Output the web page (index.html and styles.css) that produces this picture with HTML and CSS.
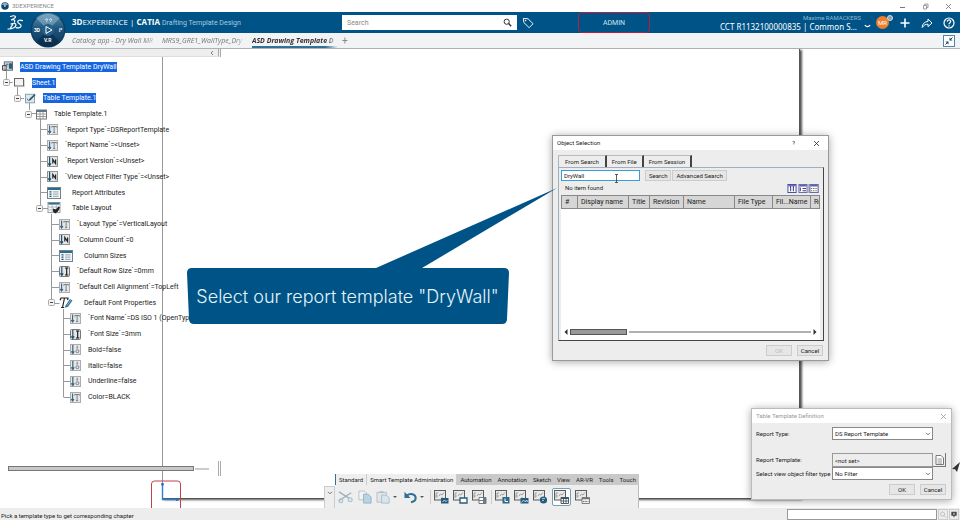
FILE: index.html
```html
<!DOCTYPE html>
<html lang="en">
<head>
    <meta charset="UTF-8">
    <meta name="viewport" content="width=device-width, initial-scale=1.0">
    <title>3DEXPERIENCE</title>
    <link rel="stylesheet" href="styles.css">
</head>
<body>
    <svg class="sprite" aria-hidden="true">
        <symbol id="i-text" viewBox="0 0 11 11">
            <rect x=".5" y=".5" width="10" height="10" fill="#e4e6e8" stroke="#a9adb0"/>
            <path d="M2.6 1.5v7M1.2 7l1.4 2L4 7" fill="none" stroke="#35657f" stroke-width="1.1"/>
            <path d="M4.8 3.6V2.5h4.6v1.1M7.1 2.5v6M6 8.6h2.2" fill="none" stroke="#777" stroke-width=".9"/>
        </symbol>
        <symbol id="i-num" viewBox="0 0 11 11">
            <rect x=".5" y=".5" width="10" height="10" fill="#e4e6e8" stroke="#8f9498"/>
            <path d="M2.6 1v8M1.2 7.4l1.4 2 1.4-2" fill="none" stroke="#23546f" stroke-width="1.2"/>
            <path d="M5.8 7.5V3.5L8.6 7.5V3.5" fill="none" stroke="#222" stroke-width="1.2"/>
        </symbol>
        <symbol id="i-len" viewBox="0 0 11 11">
            <rect x=".5" y=".5" width="10" height="10" rx="1" fill="#e4e6e8" stroke="#777"/>
            <path d="M2.8 1v8M1.4 7.4l1.4 2 1.4-2" fill="none" stroke="#23546f" stroke-width="1.2"/>
            <path d="M6 2h3.4M7.7 2v7M6 9h3.4" fill="none" stroke="#111" stroke-width="1.1"/>
        </symbol>
        <symbol id="i-bool" viewBox="0 0 11 11">
            <rect x=".5" y=".5" width="10" height="10" fill="#e4e6e8" stroke="#a9adb0"/>
            <path d="M2.8 1v8M1.4 7.4l1.4 2 1.4-2" fill="none" stroke="#35657f" stroke-width="1.2"/>
            <path d="M7.2 1.8v3" stroke="#777"/>
            <circle cx="7.4" cy="7.2" r="1.5" fill="none" stroke="#777" stroke-width=".9"/>
        </symbol>
        <symbol id="i-list" viewBox="0 0 14 12">
            <rect x=".5" y=".5" width="13" height="11" fill="#f3f7f9" stroke="#70838e"/>
            <path d="M1 2h12" stroke="#2a6c8c" stroke-width="2"/>
            <path d="M2.5 4.9h2M2.5 7.1h2M2.5 9.3h2" stroke="#1d4f6a" stroke-width="1.2"/>
            <path d="M6 4.9h5.5M6 7.1h5.5M6 9.3h5.5" stroke="#7a8b95" stroke-width=".8"/>
        </symbol>
        <symbol id="i-layout" viewBox="0 0 14 13">
            <rect x=".5" y=".5" width="13" height="11" fill="#fff" stroke="#8b979e"/>
            <path d="M1 1.8h12" stroke="#2a6c8c" stroke-width="2"/>
            <path d="M1 5.5h12M1 8.5h12M5 2v9.5M9.5 2v9.5" stroke="#9aa4aa" stroke-width=".8"/>
            <path d="M6 7l3 1 3-3 1.5 1-2 4-3 2.5L6 10.5z" fill="#222"/>
        </symbol>
        <symbol id="i-font" viewBox="0 0 14 12">
            <path d="M1 3.2L2 1h7l-.4 2.2M5.5 1L3.5 10.5M2 10.5h3.2" fill="none" stroke="#222" stroke-width="1.2"/>
            <path d="M6.5 8.5L11 2l2.5 1.6L9 9.8l-3 1z" fill="#2b7195"/>
            <path d="M8 8.5L12 3" stroke="#a9d2e6" stroke-width=".7"/>
        </symbol>
        <symbol id="i-grid" viewBox="0 0 11 10">
            <rect x=".5" y=".5" width="10" height="9" fill="#fff" stroke="#777"/>
            <path d="M1 1.5h9" stroke="#54758a" stroke-width="2"/>
            <path d="M1 4.5h9M1 7h9M4 2v7.5M7 2v7.5" stroke="#888" stroke-width=".8"/>
        </symbol>
        <symbol id="i-sheet" viewBox="0 0 11 9">
            <rect x=".5" y=".5" width="9" height="7.5" fill="#f4f4f4" stroke="#666"/>
            <path d="M1.5 8.6h9.2V1.5" fill="none" stroke="#bbb" stroke-width=".7"/>
        </symbol>
        <symbol id="i-pen" viewBox="0 0 11 10">
            <rect x=".5" y=".8" width="9" height="8.5" fill="#dce9ef" stroke="#8da0aa"/>
            <path d="M3.5 7.5L4.2 5.5 9.5.4l1.2 1.2-5.200 5.200z" fill="#2f566b"/>
            <path d="M2 5l1.5 2.500" stroke="#4d8f7a"/>
        </symbol>
        <symbol id="i-root" viewBox="0 0 12 11">
            <rect x="2.5" y=".5" width="9" height="9" fill="#d6e2e9" stroke="#48606e"/>
            <path d="M4 3h3M4 5h2M8 2.500h2.500v5H8z" fill="#2b5670" stroke="#2b5670"/>
            <path d="M.5 4.500h4v5h-4z" fill="#fff" stroke="#333"/>
            <path d="M1.500 6h2M1.500 8h2" stroke="#333" stroke-width=".7"/>
        </symbol>
        <symbol id="i-minus" viewBox="0 0 7 7">
            <rect x=".5" y=".5" width="6" height="6" rx="1" fill="#f4f4f4" stroke="#aaa"/>
            <path d="M2 3.500h3" stroke="#444"/>
        </symbol>
        <symbol id="i-chevron" viewBox="0 0 6 4">
            <path d="M1 .8l2 2 2-2" fill="none" stroke="#555" stroke-width=".8"/>
        </symbol>
        <symbol id="i-close" viewBox="0 0 7 7">
            <path d="M1 1l5 5M6 1L1 6" stroke="currentColor" stroke-width=".8"/>
        </symbol>
        <symbol id="i-tpl" viewBox="0 0 15 14">
            <rect x=".5" y=".5" width="11" height="9.500" fill="#e9e9e9" stroke="#5b5b5b"/>
            <path d="M2 8V3h2M5 6l1.500-2L8 5l2-2.500M2 6h2M7 8h2" fill="none" stroke="#8c8c8c" stroke-width=".8"/>
        </symbol>
    </svg>

    <header class="titlebar">
        <svg class="app-logo" viewBox="0 0 9 9"><circle cx="4.500" cy="4.500" r="4.200" fill="#12456b"/><path d="M1 3a4 4 0 0 1 7 0L4.500 4z" fill="#7fb0cf"/><path d="M3.800 3.500l2 1-2 1.200z" fill="#fff"/></svg>
        <span class="app-name">3DEXPERIENCE</span>
        <button class="win-btn" aria-label="Minimize"><svg viewBox="0 0 7 7"><path d="M1 4.500h5" stroke="#777"/></svg></button>
        <button class="win-btn" aria-label="Restore"><svg viewBox="0 0 7 7"><path d="M1.500 2.500h3v3.500h-3zM2.700 2.300V1H6v3.600H4.700" fill="none" stroke="#777" stroke-width=".7"/></svg></button>
        <button class="win-btn" aria-label="Close"><svg viewBox="0 0 7 7"><use href="#i-close"/></svg></button>
    </header>

    <nav class="topbar">
        <svg class="ds-logo" viewBox="0 0 16 16">
            <g fill="none" stroke="#fff" stroke-width="1.200" stroke-linecap="round" stroke-linejoin="round">
                <path d="M3.500 1.500c2.500-1 5-1 5 .2S6.500 4 4.500 4.800c2.500-.4 4 .4 3 2.200"/>
                <path d="M1 14c3.500.2 8-1.400 8-4C9 8 6.500 7.800 4 9l2-.2L3.200 13.600"/>
                <path d="M15.500 5.600c-2.400-1-4.800-.4-4.800 1.200 0 1.800 3.700 2.200 3.400 4.200-.3 1.800-2.800 2.200-5 1.600"/>
            </g>
        </svg>
        <div class="brand"><b>3D</b>EXPERIENCE <span class="bar">|</span> <b>CATIA</b> <span class="app">Drafting Template Design</span></div>
        <form class="search">
            <input type="text" placeholder="Search" aria-label="Search">
            <button type="button" aria-label="Run search"><svg viewBox="0 0 9 9"><circle cx="3.700" cy="3.700" r="2.600" fill="none" stroke="#333"/><path d="M5.600 5.600l2.600 2.600" stroke="#333" stroke-width="1.400"/></svg></button>
        </form>
        <button class="icon-btn tag" aria-label="Tags"><svg viewBox="0 0 13 13"><path d="M1.500 1.500l5 .4L12 7.300 7.800 11.600 2 6z" fill="none" stroke="#fff" stroke-linejoin="round"/><circle cx="3.900" cy="3.900" r=".8" fill="#fff"/></svg></button>
        <button class="admin">ADMIN</button>
        <div class="user">
            <span class="user-name">Maxime RAMACKERS</span>
            <span class="user-space">CCT R1132100000835 | Common S...</span>
        </div>
        <button class="icon-btn down" aria-label="Change space"><svg viewBox="0 0 7 5"><path d="M.8 1.200q2.700 3 5.400 0" fill="none" stroke="#fff" stroke-width="1.200"/></svg></button>
        <div class="avatar">MR<span class="badge"></span></div>
        <button class="icon-btn" aria-label="Add"><svg viewBox="0 0 12 12"><path d="M6 1.500v9M1.500 6h9" stroke="#fff" stroke-width="1.600"/></svg></button>
        <button class="icon-btn" aria-label="Share"><svg viewBox="0 0 12 12"><path d="M1.200 10.500C1.500 6.500 4 4.600 7 4.500V2l4 4-4 3.600V7.200c-2.500 0-4.200.9-5.800 3.300z" fill="none" stroke="#fff" stroke-linejoin="round"/></svg></button>
        <button class="icon-btn" aria-label="Help"><svg viewBox="0 0 12 12"><circle cx="6" cy="6" r="5" fill="none" stroke="#fff" stroke-width="1.200"/><path d="M4.300 4.700c0-2.400 3.500-2.200 3.400-.1C7.700 5.800 6 5.800 6 7.300M6 8.300v1.100" fill="none" stroke="#fff" stroke-width="1.200"/></svg></button>

        <svg class="compass" viewBox="0 0 36 36">
            <defs><linearGradient id="cg" x1="0" y1="0" x2="0" y2="1"><stop offset="0" stop-color="#5d91b2"/><stop offset=".45" stop-color="#1e567d"/><stop offset="1" stop-color="#0c3558"/></linearGradient></defs>
            <circle cx="18" cy="18" r="17.500" fill="#0b4069"/>
            <circle cx="18" cy="18" r="16" fill="url(#cg)"/>
            <path d="M6 6a17 17 0 0 1 24 0L22 14a6 6 0 0 0-8 0z" fill="#8db5cc" opacity=".55"/>
            <path d="M6 30a17 17 0 0 0 24 0l-8-8a6 6 0 0 1-8 0z" fill="#082c4b" opacity=".7"/>
            <circle cx="18" cy="18" r="6" fill="#245f87"/>
            <path d="M16 14.500l6 3.500-6 3.500z" fill="none" stroke="#fff"/>
            <path d="M15 8q1-2 2.500-1l-1 3M19 8q1-2 2.500-1l-1 3" fill="none" stroke="#dbe8f0" stroke-width=".9"/>
            <text x="4" y="20">3D</text><text x="29" y="20">i²</text><text x="14" y="30">V.R</text>
        </svg>
    </nav>

    <div class="tabbar">
        <a class="tab" href="#">Catalog app - Dry Wall MR</a>
        <a class="tab" href="#">MRS9_GRE1_WallType_Dry</a>
        <a class="tab active" href="#">ASD Drawing Template D</a>
        <button class="add-tab" aria-label="New tab">+</button>
        <button class="shrink" aria-label="Exit full screen"><svg viewBox="0 0 12 12"><rect x=".5" y=".5" width="11" height="11" fill="#fff" stroke="#4f86a8"/><path d="M6.500 2.500v3h3zM5.500 9.500v-3h-3z" fill="#12456b"/><path d="M7 5l2.500-2.500M5 7L2.500 9.500" stroke="#12456b"/></svg></button>
    </div>

    <main class="workspace">
        <div class="sheet"></div>
        <svg class="axis" viewBox="0 0 32 28">
            <path d="M1.500 28V4q0-3 3-3h23q3 0 3 3v24" fill="none" stroke="#c0404c"/>
            <path d="M12.500 3v16.500h16" fill="none" stroke="#2f7fd0" stroke-width="1.400"/>
            <path d="M11.300 3h2.400v2.400h-2.400zM26 18.300h2.400v2.400H26z" fill="#1f6fc4"/>
        </svg>

        <aside class="panel">
            <div class="panel-head">
                <button aria-label="Collapse tree"><svg viewBox="0 0 4 6"><path d="M3 1L1 3l2 2" fill="none" stroke="#666" stroke-width=".8"/></svg></button>
            </div>
            <div class="tree-wrap">
                <svg class="links" viewBox="0 0 90 348" fill="none" stroke="#999">
                    <path d="M6.500 14v8M6.500 25.500h6M17.500 30v8M18 41.500h6M29.500 45v8M30 56.500h6M40.500 62v86M51.500 157v85M63.500 252v88"/>
                    <path d="M40.500 72.500h8M40.500 88.500h8M40.500 104.500h8M40.500 120.500h8M40.500 135.500h8M40.500 151.500h8M51.500 167.500h8M51.500 183.500h8M51.500 198.500h8M51.500 214.500h8M51.500 230.500h8M51.500 246.500h8M63.500 261.500h7M63.500 277.500h7M63.500 293.500h7M63.500 308.500h7M63.500 324.500h7M63.500 340.500h7"/>
                </svg>
                <ul class="tree">
                    <li class="l0"><svg class="ico"><use href="#i-root"/></svg><span class="sel">ASD Drawing Template DryWall</span></li>
                    <li class="l1 open"><svg class="box"><use href="#i-minus"/></svg><svg class="ico"><use href="#i-sheet"/></svg><span class="sel">Sheet.1</span></li>
                    <li class="l2 open"><svg class="box"><use href="#i-minus"/></svg><svg class="ico"><use href="#i-pen"/></svg><span class="sel">Table Template.1</span></li>
                    <li class="l3 open"><svg class="box"><use href="#i-minus"/></svg><svg class="ico"><use href="#i-grid"/></svg><span>Table Template.1</span></li>
                    <li class="l4"><svg class="ico"><use href="#i-text"/></svg><span>`Report Type`=DSReportTemplate</span></li>
                    <li class="l4"><svg class="ico"><use href="#i-text"/></svg><span>`Report Name`=&lt;Unset&gt;</span></li>
                    <li class="l4"><svg class="ico"><use href="#i-num"/></svg><span>`Report Version`=&lt;Unset&gt;</span></li>
                    <li class="l4"><svg class="ico"><use href="#i-num"/></svg><span>`View Object Filter Type`=&lt;Unset&gt;</span></li>
                    <li class="l4 wide"><svg class="ico"><use href="#i-list"/></svg><span>Report Attributes</span></li>
                    <li class="l4 wide open"><svg class="box"><use href="#i-minus"/></svg><svg class="ico"><use href="#i-layout"/></svg><span>Table Layout</span></li>
                    <li class="l5"><svg class="ico"><use href="#i-text"/></svg><span>`Layout Type`=VerticalLayout</span></li>
                    <li class="l5"><svg class="ico"><use href="#i-num"/></svg><span>`Column Count`=0</span></li>
                    <li class="l5 wide"><svg class="ico"><use href="#i-list"/></svg><span>Column Sizes</span></li>
                    <li class="l5"><svg class="ico"><use href="#i-len"/></svg><span>`Default Row Size`=0mm</span></li>
                    <li class="l5"><svg class="ico"><use href="#i-text"/></svg><span>`Default Cell Alignment`=TopLeft</span></li>
                    <li class="l5 wide open"><svg class="box"><use href="#i-minus"/></svg><svg class="ico"><use href="#i-font"/></svg><span>Default Font Properties</span></li>
                    <li class="l6"><svg class="ico"><use href="#i-text"/></svg><span>`Font Name`=DS ISO 1 (OpenTyp</span></li>
                    <li class="l6"><svg class="ico"><use href="#i-len"/></svg><span>`Font Size`=3mm</span></li>
                    <li class="l6"><svg class="ico"><use href="#i-bool"/></svg><span>Bold=false</span></li>
                    <li class="l6"><svg class="ico"><use href="#i-bool"/></svg><span>Italic=false</span></li>
                    <li class="l6"><svg class="ico"><use href="#i-bool"/></svg><span>Underline=false</span></li>
                    <li class="l6"><svg class="ico"><use href="#i-text"/></svg><span>Color=BLACK</span></li>
                </ul>
            </div>
            <div class="panel-scroll"><i class="thumb"></i><i class="track"></i><i class="grip"></i></div>
        </aside>

        <section class="dialog selection">
            <div class="dialog-head"><h2>Object Selection</h2><button aria-label="Help">?</button><button aria-label="Close"><svg viewBox="0 0 7 7"><use href="#i-close"/></svg></button></div>
            <div class="dlg-tabs">
                <button class="active">From Search</button><button>From File</button><button>From Session</button>
            </div>
            <div class="dlg-page">
                <div class="query">
                    <input type="text" value="DryWall" aria-label="Object name">
                    <button class="btn">Search</button>
                    <button class="btn">Advanced Search</button>
                </div>
                <div class="found">
                    <span>No item found</span>
                    <button aria-label="Columns"><svg viewBox="0 0 10 10"><rect x=".5" y=".5" width="9" height="9" fill="#fff" stroke="#3d3f96"/><path d="M1 2h8M3.500 2v6M6.500 2v6" stroke="#3d3f96" stroke-width="1.200"/></svg></button>
                    <button aria-label="Details"><svg viewBox="0 0 10 10"><rect x=".5" y=".5" width="9" height="9" fill="#fff" stroke="#5d5fa8"/><path d="M1 2h8" stroke="#3d3f96" stroke-width="1.400"/><path d="M2 4v4M4.500 5h4M4.500 7.500h4" stroke="#3d3f96" stroke-width="1.200"/></svg></button>
                    <button class="on" aria-label="Table"><svg viewBox="0 0 10 10"><rect x=".5" y=".5" width="9" height="9" fill="#fff" stroke="#5d5fa8"/><path d="M1 2h8" stroke="#3d3f96" stroke-width="1.400"/><path d="M1.500 5h7M1.500 7.500h7" stroke="#555" stroke-dasharray="1.500 1"/></svg></button>
                </div>
                <div class="results">
                    <table>
                        <thead><tr><th class="c-num">#</th><th class="c-disp">Display name</th><th class="c-title">Title</th><th class="c-rev">Revision</th><th class="c-name">Name</th><th class="c-type">File Type</th><th class="c-file">Fil...Name</th><th class="c-last">Re</th></tr></thead>
                    </table>
                    <div class="hscroll">
                        <svg viewBox="0 0 4 6"><path d="M3.500 0v6L.5 3z" fill="#333"/></svg>
                        <i class="thumb"></i><i class="track"></i>
                        <svg viewBox="0 0 4 6"><path d="M.5 0v6l3-3z" fill="#333"/></svg>
                    </div>
                </div>
            </div>
            <div class="dlg-foot"><button class="btn" disabled>OK</button><button class="btn">Cancel</button></div>
            <svg class="ibeam" viewBox="0 0 5 9"><path d="M1 .5h3M2.500.5v8M1 8.500h3" fill="none" stroke="#333" stroke-width=".8"/></svg>
        </section>

        <div class="callout">
            <svg viewBox="0 0 372 138"><path d="M190 81L371 1 236 81h82q5 0 5 5l-2 46q0 5-5 5H8q-5 0-5-5L1 86q0-5 5-5z" fill="#005386"/></svg>
            <p>Select our report template "DryWall"</p>
        </div>

        <section class="dialog definition">
            <div class="dialog-head"><h2>Table Template Definition</h2><button aria-label="Close"><svg viewBox="0 0 7 7"><use href="#i-close"/></svg></button></div>
            <form class="fields">
                <label for="rtype">Report Type:</label>
                <div class="pick"><select id="rtype"><option>DS Report Template</option></select><svg viewBox="0 0 6 4"><use href="#i-chevron"/></svg></div>
                <label class="gap" for="rtpl">Report Template:</label>
                <input class="gap" id="rtpl" type="text" value="&lt;not set&gt;" readonly>
                <button class="browse gap" type="button" aria-label="Browse"><svg viewBox="0 0 9 10"><path d="M1 .5h5l2.500 2.500v6.500H1z" fill="#fff" stroke="#777"/><path d="M2.500 4h4.500M2.500 6h4.500M2.500 8h4.500" stroke="#777" stroke-width=".8"/></svg></button>
                <label for="filter">Select view object filter type</label>
                <div class="pick"><select id="filter"><option>No Filter</option></select><svg viewBox="0 0 6 4"><use href="#i-chevron"/></svg></div>
            </form>
            <div class="dlg-foot"><button class="btn">OK</button><button class="btn">Cancel</button></div>
        </section>
        <svg class="cursor" viewBox="0 0 9 11"><path d="M9 0L1 7l3 .2L6 10z" fill="#333"/></svg>

        <div class="actionbar">
            <button class="handle" aria-label="Collapse"><svg viewBox="0 0 6 4"><use href="#i-chevron"/></svg></button>
            <div class="bar-main">
                <div class="bar-tabs">
                    <button class="pin">Standard</button><button class="active">Smart Template Administration</button><button>Automation</button><button>Annotation</button><button>Sketch</button><button>View</button><button>AR-VR</button><button>Tools</button><button>Touch</button>
                </div>
                <div class="bar-tools">
                    <button aria-label="Cut"><svg viewBox="0 0 16 14"><path d="M1 1.500l11 7M1 11l13-8.500" stroke="#9fb0ba" stroke-width="1.500"/><circle cx="3" cy="11" r="2" fill="none" stroke="#a9c6d6" stroke-width="1.400"/><circle cx="13" cy="10" r="2" fill="none" stroke="#a9c6d6" stroke-width="1.400"/></svg></button>
                    <button aria-label="Copy"><svg viewBox="0 0 16 14"><path d="M2 .7h6l2 2V10H2z" fill="#f2f2f2" stroke="#b9c3c9"/><path d="M7 4h5l3 3v6.500H7z" fill="#b9d3e2" stroke="#8fb4c9"/></svg></button>
                    <button aria-label="Paste"><svg viewBox="0 0 16 14"><path d="M1 2h10v10.500H1z" fill="#e3e6e8" stroke="#b4bec4"/><path d="M4 .8h4v2H4z" fill="#b4bec4"/><path d="M6 5h5l3 2.500V13.500H6z" fill="#d9e6ee" stroke="#a5c0cf"/></svg></button>
                    <i class="caret"></i>
                    <button aria-label="Undo"><svg viewBox="0 0 16 14"><path d="M4 5.500c4-3 9.500-1.500 9.500 2.500 0 2.500-2 4-5 4.500" fill="none" stroke="#2f7296" stroke-width="2.200"/><path d="M1.500 1.500v6.500H8z" fill="#2f7296"/></svg></button>
                    <i class="caret"></i>
                    <button class="first" aria-label="Drawing template"><svg viewBox="0 0 15 14"><use href="#i-tpl"/><path d="M7 8h7.500v5.500H7z" fill="#245c7c"/><path d="M8.500 12l2-2 1.500 1.500 1-1" fill="none" stroke="#fff" stroke-width=".8"/></svg></button>
                    <button aria-label="Sheet template"><svg viewBox="0 0 15 14"><use href="#i-tpl"/><path d="M7 8h7v5H7z" fill="#fff" stroke="#245c7c" stroke-width="1.300"/></svg></button>
                    <button aria-label="Chart template"><svg viewBox="0 0 15 14"><use href="#i-tpl"/><path d="M7 7.500h7v6H7z" fill="#fff" stroke="#777"/><path d="M11 8h3v5.500h-3z" fill="#5a8098"/><path d="M7 10.500h7" stroke="#777"/></svg></button>
                    <button class="ruled" aria-label="View template"><svg viewBox="0 0 15 14"><use href="#i-tpl"/><path d="M7.500 7h7v6.500h-7z" fill="#2b6a8c"/><path d="M10 8.500v3h3" fill="none" stroke="#fff"/></svg></button>
                    <button aria-label="Image template"><svg viewBox="0 0 15 14"><use href="#i-tpl"/><path d="M6.500 8h8v5.500h-8z" fill="#245c7c"/><path d="M7.500 12.500l2-2.500 2 2 1-2 1.500 2" fill="none" stroke="#fff" stroke-width=".7"/></svg></button>
                    <button aria-label="Link template"><svg viewBox="0 0 15 14"><use href="#i-tpl"/><circle cx="10.500" cy="10" r="3.600" fill="#245c7c"/><path d="M9 8.500h3M9 10.500h2" stroke="#9fc5da"/></svg></button>
                    <button class="current" aria-label="Table template"><svg viewBox="0 0 15 14"><use href="#i-tpl"/><path d="M7 7.500h7.500v6H7z" fill="#fff" stroke="#333" stroke-width=".8"/><path d="M7 8.200h7.500" stroke="#245c7c" stroke-width="1.500"/><path d="M7 11h7.500M9.500 8v5.500M12 8v5.500" stroke="#333" stroke-width=".7"/></svg></button>
                    <button aria-label="List template"><svg viewBox="0 0 15 14"><use href="#i-tpl"/><path d="M7 7.500h7.500v6H7z" fill="#eee" stroke="#666" stroke-width=".8"/><path d="M7 8.500h7.500" stroke="#777" stroke-width="1.500"/><path d="M8 11.500h5.500" stroke="#777" stroke-dasharray="1.500 .8"/></svg></button>
                </div>
            </div>
        </div>
    </main>

    <footer class="status">
        <span>Pick a template type to get corresponding chapter</span>
        <input type="text" aria-label="Command">
        <button aria-label="Find command"><svg viewBox="0 0 9 9"><circle cx="4" cy="4" r="2.300" fill="none" stroke="#bbb"/><path d="M5.500 5.500l2.500 2.500" stroke="#bbb"/></svg></button>
        <button aria-label="Messages"><svg viewBox="0 0 9 9"><path d="M1.500 1.500h6v4.500h-2l-1 2-1-2h-2z" fill="#444"/><path d="M4.500 2.500v2.500" stroke="#fff"/></svg></button>
    </footer>
</body>
</html>
```
FILE: styles.css
```css
* {
    box-sizing: border-box;
}

body {
    margin: 0;
    height: 100vh;
    display: flex;
    flex-direction: column;
    overflow: hidden;
    background-color: #fff;
    color: #222;
    font-family: Roboto, "Noto Sans", sans-serif;
    font-size: 6px;
    line-height: 8px;
}

button,
input,
select {
    font: inherit;
    color: inherit;
    margin: 0;
    padding: 0;
    border: none;
    border-radius: 0;
    background: none;
    outline: none;
}

button {
    white-space: nowrap;
}

svg {
    display: block;
    flex: none;
}

.sprite {
    position: absolute;
    width: 0;
    height: 0;
}

/* window title */
.titlebar {
    flex: none;
    height: 12px;
    display: flex;
    align-items: center;
    padding: 0 8px 0 1px;
    color: #777;
}

.app-logo {
    width: 8px;
    height: 8px;
}

.app-name {
    flex: 1;
    margin-left: 3px;
    color: #888;
}

.win-btn {
    width: 7px;
    height: 7px;
    margin-left: 16px;
}

.win-btn svg {
    width: 7px;
    height: 7px;
}

/* blue bar */
.topbar {
    flex: none;
    position: relative;
    height: 21px;
    display: flex;
    align-items: center;
    padding: 0 5px 0 7px;
    background-color: #005386;
    color: #fff;
}

.ds-logo {
    width: 16px;
    height: 16px;
}

.brand {
    width: 270px;
    margin-left: 49px;
    font-family: "Open Sans", sans-serif;
    font-size: 8px;
    white-space: nowrap;
}

.brand .app {
    color: #a9cbe0;
    font-family: Roboto, sans-serif;
    font-size: 7px;
}

.search {
    display: flex;
    align-items: center;
    width: 175px;
    height: 15px;
    padding: 0 5px;
    background-color: #fff;
}

.search input {
    flex: 1;
    min-width: 0;
    font-size: 7px;
}

.search input::placeholder {
    color: #888;
}

.search svg {
    width: 9px;
    height: 9px;
}

.icon-btn {
    width: 12px;
    height: 12px;
    margin-left: 10px;
}

.icon-btn svg {
    width: 12px;
    height: 12px;
}

.icon-btn.tag {
    margin-left: 5px;
}

.icon-btn.down,
.icon-btn.down svg {
    width: 7px;
    height: 5px;
}

.icon-btn.down {
    margin: 8px 5px 0 7px;
}

.admin {
    width: 72px;
    height: 21px;
    margin-left: 44px;
    border: 1px solid #b51f42;
    border-radius: 4px;
    color: #cfe2ee;
    font-size: 7px;
}

.user {
    flex: 1;
    display: flex;
    flex-direction: column;
    align-items: flex-end;
    white-space: nowrap;
}

.user-name {
    margin-right: -4px;
    color: #8fb9d3;
}

.user-space {
    font-family: "Noto Sans", sans-serif;
    font-size: 8px;
    line-height: 10px;
}

.avatar {
    position: relative;
    width: 13px;
    height: 13px;
    border-radius: 50%;
    background-color: #ef7e2d;
    line-height: 13px;
    text-align: center;
}

.badge {
    position: absolute;
    top: -1px;
    right: -4px;
    width: 6px;
    height: 6px;
    border: 1px solid #ddd;
    border-radius: 50%;
    background-color: #8aa2b1;
}

.compass {
    position: absolute;
    z-index: 5;
    top: 0;
    left: 30px;
    width: 36px;
    height: 36px;
    fill: #fff;
    font-size: 5px;
    font-weight: bold;
}

/* document tabs */
.tabbar {
    flex: none;
    height: 16px;
    display: flex;
    gap: 4px;
    padding: 0 5px 0 72px;
    background-color: #f1f3f5;
    border-bottom: 1px solid #b4b7ba;
}

.tab {
    width: 86px;
    overflow: hidden;
    color: #777;
    font-family: "Open Sans", sans-serif;
    font-size: 7px;
    font-style: italic;
    line-height: 15px;
    text-decoration: none;
    white-space: nowrap;
    -webkit-mask-image: linear-gradient(90deg, #000 85%, transparent);
    mask-image: linear-gradient(90deg, #000 85%, transparent);
}

.tab.active {
    color: #333;
    font-weight: bold;
    border-bottom: 2px solid #2f7296;
}

.add-tab {
    color: #888;
    font-size: 10px;
}

.shrink {
    margin-left: auto;
}

.shrink svg {
    width: 12px;
    height: 12px;
}

/* drawing area */
.workspace {
    position: relative;
    flex: 1;
    min-height: 0;
}

.sheet {
    position: absolute;
    inset: 0 160px 9px 162px;
    border: 1px solid #555;
    border-left: 1px solid #999;
    border-top: none;
    box-shadow: 2px 1px 2px #555;
}

.axis {
    position: absolute;
    left: 150px;
    bottom: 0;
    width: 32px;
    height: 28px;
}

.panel {
    position: relative;
    display: flex;
    flex-direction: column;
    width: 221px;
    height: 100%;
}

.panel-head {
    height: 8px;
    padding: 0 4px 0 0;
    display: flex;
    align-items: center;
    justify-content: flex-end;
    background-color: #eee;
    border-bottom: 1px solid #ddd;
    border-right: 3px double #aaa;
}

.panel-head svg {
    width: 4px;
    height: 6px;
}

.tree-wrap {
    position: relative;
}

.links {
    position: absolute;
    top: 0;
    left: 0;
    width: 90px;
    height: 348px;
}

.tree {
    position: relative;
    display: grid;
    grid-auto-rows: 1fr;
    height: 348px;
    margin: 0;
    padding: 2px 0 0;
    list-style: none;
    font-size: 7px;
    line-height: 10px;
}

.tree li {
    --indent: 2px;
    display: flex;
    align-items: center;
    padding-left: var(--indent);
    white-space: nowrap;
}

.tree .l1 { --indent: 14px; }
.tree .l2 { --indent: 25px; }
.tree .l3 { --indent: 36px; }
.tree .l4 { --indent: 47px; }
.tree .l5 { --indent: 59px; }
.tree .l6 { --indent: 70px; }

.tree .ico {
    width: 11px;
    height: 11px;
    margin-right: 7px;
}

.tree .wide .ico {
    width: 14px;
    height: 12px;
    margin-right: 11px;
}

.tree .box {
    width: 7px;
    height: 7px;
    margin: 0 4px 0 -11px;
}

.tree .sel {
    background-color: #1565e0;
    color: #fff;
}

.panel-scroll {
    display: flex;
    align-items: center;
    gap: 1px;
    margin: auto 0 32px 8px;
}

.panel-scroll .thumb {
    width: 186px;
    height: 5px;
    border: 1px solid #777;
    background-color: #c8c8c8;
}

.panel-scroll .track {
    width: 14px;
    height: 2px;
    background-color: #ccc;
}

.panel-scroll .grip {
    width: 3px;
    height: 15px;
    margin-left: auto;
    border-left: 1px solid #aaa;
    border-right: 1px solid #aaa;
}

/* dialogs */
.dialog {
    position: absolute;
    display: flex;
    flex-direction: column;
    background-color: #ededed;
    border: 1px solid #999;
    box-shadow: 0 1px 8px rgba(0, 0, 0, 0.35);
}

.dialog-head {
    display: flex;
    align-items: center;
    gap: 18px;
    height: 14px;
    padding: 0 8px 0 4px;
    background-color: #fff;
}

.dialog-head h2 {
    flex: 1;
    margin: 0;
    font-size: 6px;
    font-weight: normal;
}

.dialog-head svg {
    width: 7px;
    height: 7px;
}

.btn {
    height: 11px;
    padding: 0 4px;
    border: 1px solid #ccc;
    background-color: #e6e6e6;
}

.btn:disabled {
    color: #bbb;
}

.dlg-foot {
    display: flex;
    justify-content: flex-end;
    gap: 5px;
    padding: 4px 5px;
}

.dlg-foot .btn {
    width: 26px;
    padding: 0;
}

.selection {
    top: 86px;
    left: 552px;
    width: 277px;
    height: 226px;
}

.dlg-tabs {
    display: flex;
    margin: 5px 0 0 5px;
}

.dlg-tabs button {
    height: 12px;
    padding: 0 5px;
    border-top: 1px solid #bbb;
    border-right: 2px solid #444;
}

.dlg-tabs .active {
    padding: 0 6px;
    border-left: 1px solid #aab7c2;
}

.dlg-page {
    flex: 1;
    display: flex;
    flex-direction: column;
    margin: 0 4px 0 5px;
    padding: 2px 3px 0 2px;
    border: 1px solid #9fb0bd;
    border-right-color: #444;
    border-bottom: 1px solid #444;
}

.query {
    display: flex;
    gap: 5px;
}

.query .btn {
    padding: 0 3px;
}

.query .btn + .btn {
    margin-left: -4px;
}

.query input {
    width: 79px;
    height: 11px;
    padding: 0 2px;
    border: 1px solid #3d9bd6;
    background-color: #fff;
}

.found {
    display: flex;
    align-items: center;
    height: 14px;
    padding: 0 1px 0 4px;
}

.found span {
    flex: 1;
}

.found button {
    padding: 0 0 0 1px;
}

.found .on {
    background-color: #bbb;
}

.found svg {
    width: 10px;
    height: 9px;
}

.results {
    flex: 1;
    display: flex;
    flex-direction: column;
    justify-content: space-between;
    overflow: hidden;
    background-color: #fff;
}

.results table {
    width: 100%;
    table-layout: fixed;
    border-collapse: collapse;
}

.results th {
    height: 13px;
    padding: 0 0 0 3px;
    overflow: hidden;
    border: 1px solid #888;
    background-color: #d6d6d6;
    font-size: 7px;
    font-weight: normal;
    text-align: left;
    white-space: nowrap;
}

.c-num { width: 16px; }
.c-disp { width: 51px; }
.c-title { width: 21px; }
.c-rev { width: 34px; }
.c-name { width: 51px; }
.c-type { width: 38px; }
.c-file { width: 38px; }

.hscroll {
    display: flex;
    align-items: center;
    gap: 2px;
    padding: 0 3px 5px 3px;
}

.hscroll svg {
    width: 4px;
    height: 6px;
}

.hscroll .thumb {
    width: 57px;
    height: 6px;
    border: 1px solid #555;
    background-color: #999;
}

.hscroll .track {
    flex: 1;
    height: 2px;
    background-color: #b0b0b0;
}

.ibeam {
    position: absolute;
    left: 61px;
    top: 38px;
    width: 5px;
    height: 9px;
}

.definition {
    right: 8px;
    bottom: 8px;
    width: 201px;
    border-color: #bbb;
}

.definition .dialog-head {
    padding: 0 4px;
    color: #999;
}

.fields {
    display: grid;
    grid-template-columns: 76px 101px 13px;
    align-items: center;
    padding: 4px 4px 0;
}

.fields label {
    grid-column: 1;
    white-space: nowrap;
}

.fields .gap {
    margin-top: 13px;
}

.fields input {
    height: 14px;
    padding: 0 2px;
    border: 1px solid #999;
}

.pick {
    grid-column: 2;
    position: relative;
}

.pick select {
    width: 100%;
    height: 13px;
    padding: 0 2px;
    appearance: none;
    border: 1px solid #888;
    background-color: #fff;
}

.pick svg {
    position: absolute;
    top: 5px;
    right: 2px;
    width: 6px;
    height: 4px;
}

.browse {
    height: 14px;
    padding-left: 2px;
    border-right: 1px solid #777;
    border-bottom: 1px solid #777;
}

.browse svg {
    width: 9px;
    height: 10px;
}

.cursor {
    position: absolute;
    right: 0;
    bottom: 35px;
    width: 9px;
    height: 11px;
}

/* speech bubble */
.callout {
    position: absolute;
    left: 186px;
    top: 138px;
    width: 372px;
    height: 138px;
    display: flex;
    align-items: flex-end;
}

.callout svg {
    position: absolute;
    width: 372px;
    height: 138px;
}

.callout p {
    position: relative;
    width: 323px;
    margin: 0;
    color: #e4f4fa;
    font-family: Inter, sans-serif;
    font-size: 18px;
    font-weight: 300;
    line-height: 57px;
    text-align: center;
    white-space: nowrap;
}

/* action bar */
.actionbar {
    position: absolute;
    left: 324px;
    bottom: 0;
    display: flex;
    align-items: flex-end;
}

.handle {
    display: flex;
    justify-content: center;
    width: 11px;
    height: 22px;
    padding-top: 4px;
    background-color: #eee;
    border: 1px solid #ccc;
    border-bottom: none;
}

.handle svg {
    width: 6px;
    height: 4px;
}

.bar-tabs {
    display: flex;
    background-color: #c9c9c9;
}

.bar-tabs button {
    height: 11px;
    padding: 0 3px;
}

.bar-tabs .pin,
.bar-tabs .active {
    background-color: #eee;
    border-right: 1px solid #ccc;
}

.bar-tabs .pin {
    border-left: 1px solid #2f7296;
}

.bar-tools {
    display: flex;
    align-items: center;
    gap: 4px;
    height: 23px;
    padding-left: 3px;
    background-color: #eee;
    border-right: 1px solid #bbb;
}

.bar-tools svg {
    width: 15px;
    height: 14px;
}

.caret {
    margin: 0 2px 0 -2px;
    border: 2px solid transparent;
    border-top-color: #555;
    border-bottom: none;
}

.bar-tools .first,
.bar-tools .ruled {
    padding-left: 3px;
    border-left: 1px solid #ccc;
}

.bar-tools .current {
    padding: 1px;
    border: 1px solid #6fa0ba;
    border-radius: 2px;
    background-color: #fff;
}

/* status line */
.status {
    flex: none;
    height: 12px;
    display: flex;
    align-items: center;
    gap: 1px;
    padding: 0 1px;
    background-color: #ededed;
}

.status span {
    flex: 1;
    padding-top: 3px;
}

.status input {
    width: 150px;
    height: 11px;
    border: 1px solid #999;
    background-color: #fff;
}

.status button {
    border: 1px solid #ccc;
}

.status svg {
    width: 8px;
    height: 9px;
}
```
